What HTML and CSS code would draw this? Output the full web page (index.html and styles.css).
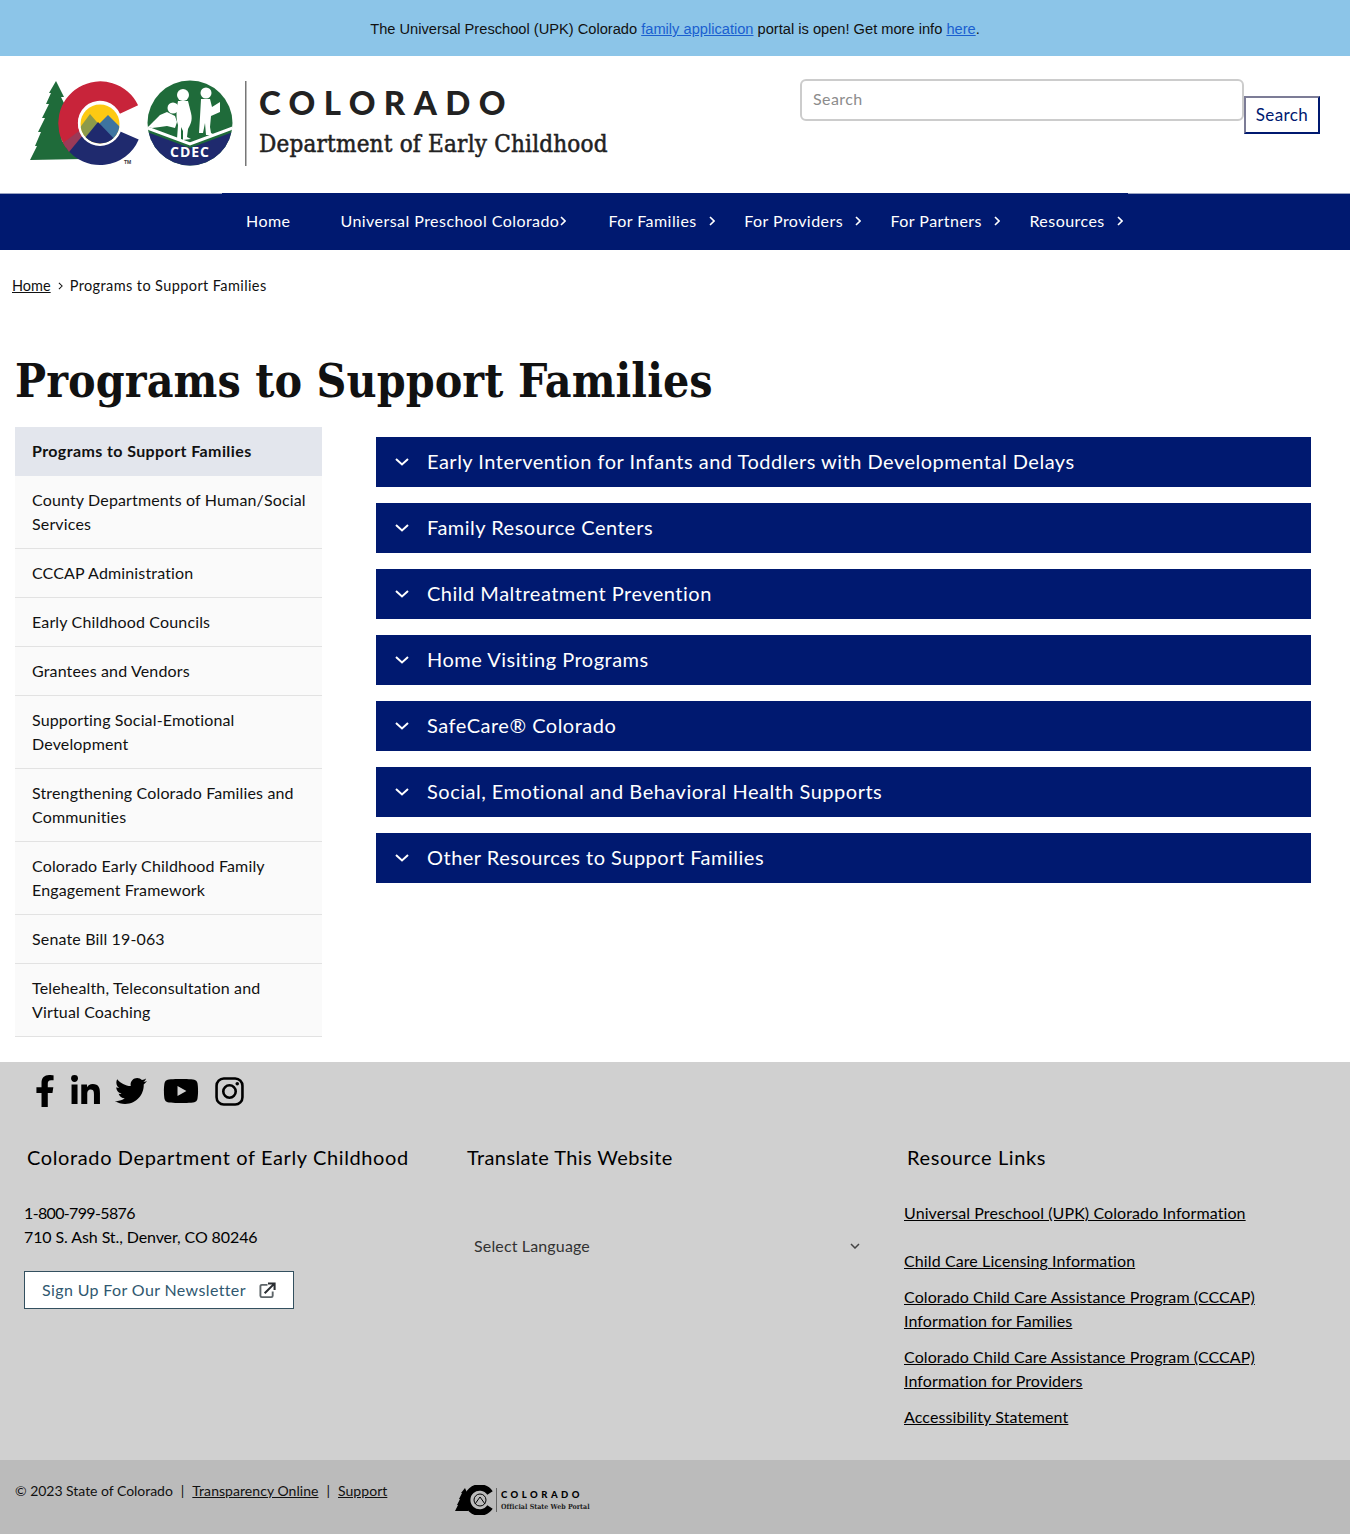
FILE: index.html
```html
<!DOCTYPE html>
<html lang="en">
<head>
<meta charset="utf-8">
<title>Programs to Support Families</title>
<link rel="stylesheet" href="styles.css">
</head>
<body>
<div class="banner">The Universal Preschool (UPK) Colorado <a href="#">family application</a> portal is open! Get more info <a href="#">here</a>.</div>
<header class="header">
  <div class="brand">
    <svg class="logo" viewBox="0 0 216 90" width="216" height="90" aria-hidden="true">
      <path fill="#1f6b3a" d="M26 0 34 16 31 16 38 30 30 46 32 60 52 78 0 79 7 65 5 65 11 51 8 51 15 37 12 37 19 23 16 23 21 12 19 12Z"/>
      <path fill="#c8243a" d="M108.100 24.200A42 42 0 1 0 36 66.700L52.200 54.900A22 22 0 1 1 89.900 32.700Z"/>
      <path fill="#1f2a6e" d="M36 66.700A42 42 0 0 0 108.700 58.400L90.300 50.600A22 22 0 0 1 52.200 54.900Z"/>
      <path fill="#9a3a58" d="M33 62 49 50 52.200 54.900 39 71Z"/>
      <circle cx="70" cy="43" r="22" fill="#fff"/>
      <clipPath id="c1"><circle cx="70" cy="43" r="19.500"/></clipPath>
      <g clip-path="url(#c1)">
        <rect x="48" y="22" width="44" height="44" fill="#fdc913"/>
        <path fill="#8d9a4a" d="M46 52 60 33 72 47 60 66H46Z"/>
        <path fill="#3e74a0" d="M68 44 78 34 94 50V66H76Z"/>
        <path fill="#1f2a6e" d="M46 68 68 41 94 68Z"/>
      </g>
      <text x="94" y="83" class="tm">TM</text>
      <circle cx="160" cy="42" r="42.500" fill="#1f6b3a"/>
      <clipPath id="c2"><circle cx="160" cy="42" r="42.500"/></clipPath>
      <g clip-path="url(#c2)">
        <path fill="#1f2a6e" d="M112 49 160 67 208 49V90H112Z"/>
        <path fill="none" stroke="#fff" stroke-width="3" d="M112 45 160 63 208 45"/>
      </g>
      <g fill="#fff">
        <circle cx="143" cy="27" r="5.500"/>
        <path d="M137 31 145 35 147 41 145 47 137 45 130 46 122 47 118 46 124 40 130 34Z"/>
        <circle cx="153" cy="14" r="6"/>
        <path d="M148 20H158L161 32C163 40 160 44 158 48L157 56 161 58 153 59 153 50 151 46 151 58 147 58 148 44C146 38 146 30 148 20Z"/>
        <circle cx="176" cy="12" r="5.500"/>
        <path d="M171 18H180L182 26 190 21 190 31 181 35 180 46 181 52 185 54 176 54 175 42 173 52 169 52 170 36Z"/>
      </g>
      <text x="160" y="76" class="cdec">CDEC</text>
      <rect x="215" y="0" width="1.500" height="85" fill="#777"/>
    </svg>
    <div class="wordmark">
      <div class="wm-top">COLORADO</div>
      <div class="wm-sub">Department of Early Childhood</div>
    </div>
  </div>
  <form class="search">
    <input class="search-input" type="text" placeholder="Search">
    <button class="search-btn" type="button">Search</button>
  </form>
</header>
<nav class="nav">
  <div class="nav-inner">
    <a class="nav-item nav-home" href="#">Home</a>
    <a class="nav-item nav-upk" href="#">Universal Preschool Colorado<svg class="chev" viewBox="0 0 6 10" width="6" height="10"><path d="M1 1l4 4-4 4" fill="none" stroke="#fff" stroke-width="1.600"/></svg></a>
    <a class="nav-item" href="#">For Families<svg class="chev" viewBox="0 0 6 10" width="6" height="10"><path d="M1 1l4 4-4 4" fill="none" stroke="#fff" stroke-width="1.600"/></svg></a>
    <a class="nav-item" href="#">For Providers<svg class="chev" viewBox="0 0 6 10" width="6" height="10"><path d="M1 1l4 4-4 4" fill="none" stroke="#fff" stroke-width="1.600"/></svg></a>
    <a class="nav-item" href="#">For Partners<svg class="chev" viewBox="0 0 6 10" width="6" height="10"><path d="M1 1l4 4-4 4" fill="none" stroke="#fff" stroke-width="1.600"/></svg></a>
    <a class="nav-item" href="#">Resources<svg class="chev" viewBox="0 0 6 10" width="6" height="10"><path d="M1 1l4 4-4 4" fill="none" stroke="#fff" stroke-width="1.600"/></svg></a>
  </div>
</nav>
<div class="crumbs"><a href="#">Home</a><svg class="crumb-sep" viewBox="0 0 6 10" width="5" height="8"><path d="M1 1l4 4-4 4" fill="none" stroke="#111" stroke-width="1.300"/></svg><span>Programs to Support Families</span></div>
<h1 class="title">Programs to Support Families</h1>
<main class="content">
  <ul class="side">
    <li class="side-item side-active">Programs to Support Families</li>
    <li class="side-item">County Departments of Human/Social Services</li>
    <li class="side-item">CCCAP Administration</li>
    <li class="side-item">Early Childhood Councils</li>
    <li class="side-item">Grantees and Vendors</li>
    <li class="side-item">Supporting Social-Emotional Development</li>
    <li class="side-item">Strengthening Colorado Families and Communities</li>
    <li class="side-item">Colorado Early Childhood Family Engagement Framework</li>
    <li class="side-item">Senate Bill 19-063</li>
    <li class="side-item">Telehealth, Teleconsultation and Virtual Coaching</li>
  </ul>
  <div class="accordion">
    <div class="acc"><svg class="acc-chev" viewBox="0 0 14 8" width="14" height="8"><path d="M1 1l6 5.500L13 1" fill="none" stroke="#fff" stroke-width="2"/></svg>Early Intervention for Infants and Toddlers with Developmental Delays</div>
    <div class="acc"><svg class="acc-chev" viewBox="0 0 14 8" width="14" height="8"><path d="M1 1l6 5.500L13 1" fill="none" stroke="#fff" stroke-width="2"/></svg>Family Resource Centers</div>
    <div class="acc"><svg class="acc-chev" viewBox="0 0 14 8" width="14" height="8"><path d="M1 1l6 5.500L13 1" fill="none" stroke="#fff" stroke-width="2"/></svg>Child Maltreatment Prevention</div>
    <div class="acc"><svg class="acc-chev" viewBox="0 0 14 8" width="14" height="8"><path d="M1 1l6 5.500L13 1" fill="none" stroke="#fff" stroke-width="2"/></svg>Home Visiting Programs</div>
    <div class="acc"><svg class="acc-chev" viewBox="0 0 14 8" width="14" height="8"><path d="M1 1l6 5.500L13 1" fill="none" stroke="#fff" stroke-width="2"/></svg>SafeCare® Colorado</div>
    <div class="acc"><svg class="acc-chev" viewBox="0 0 14 8" width="14" height="8"><path d="M1 1l6 5.500L13 1" fill="none" stroke="#fff" stroke-width="2"/></svg>Social, Emotional and Behavioral Health Supports</div>
    <div class="acc"><svg class="acc-chev" viewBox="0 0 14 8" width="14" height="8"><path d="M1 1l6 5.500L13 1" fill="none" stroke="#fff" stroke-width="2"/></svg>Other Resources to Support Families</div>
  </div>
</main>
<footer class="footer">
  <div class="social">
    <svg class="ic-f" viewBox="0 0 320 512" width="20" height="32"><path d="M279.140 288l14.220-92.660h-88.910v-60.130c0-25.350 12.420-50.060 52.240-50.060h40.420V6.260S260.430 0 225.360 0c-73.220 0-121.080 44.380-121.080 124.720v70.620H22.890V288h81.390v224h100.170V288z"/></svg>
    <svg class="ic-in" viewBox="0 0 448 512" width="29" height="33"><path d="M100.280 448H7.400V148.900h92.880zM53.790 108.100C24.090 108.100 0 83.500 0 53.800a53.790 53.790 0 0 1 107.580 0c0 29.700-24.100 54.300-53.790 54.300zM447.900 448h-92.680V302.400c0-34.700-.7-79.200-48.290-79.200-48.290 0-55.690 37.700-55.690 76.700V448h-92.780V148.900h89.080v40.800h1.300c12.400-23.500 42.690-48.300 87.880-48.300 94 0 111.280 61.900 111.280 142.300V448z"/></svg>
    <svg class="ic-tw" viewBox="0 0 512 512" width="32" height="32"><path d="M459.370 151.716c.325 4.548.325 9.097.325 13.645 0 138.720-105.583 298.558-298.558 298.558-59.452 0-114.680-17.219-161.137-47.106 8.447.974 16.568 1.299 25.340 1.299 49.055 0 94.213-16.568 130.274-44.832-46.132-.975-84.792-31.188-98.112-72.772 6.498.974 12.995 1.624 19.818 1.624 9.421 0 18.843-1.300 27.614-3.573-48.081-9.747-84.143-51.980-84.143-102.985v-1.299c13.969 7.797 30.214 12.670 47.431 13.319-28.264-18.843-46.781-51.005-46.781-87.391 0-19.492 5.197-37.360 14.294-52.954 51.655 63.675 129.300 105.258 216.365 109.807-1.624-7.797-2.599-15.918-2.599-24.040 0-57.828 46.782-104.934 104.934-104.934 30.213 0 57.502 12.670 76.670 33.137 23.715-4.548 46.456-13.320 66.599-25.340-7.798 24.366-24.366 44.833-46.132 57.827 21.117-2.273 41.584-8.122 60.426-16.243-14.292 20.791-32.161 39.308-52.628 54.253z"/></svg>
    <svg class="ic-yt" viewBox="0 0 576 512" width="36" height="32"><path d="M549.655 124.083c-6.281-23.650-24.787-42.276-48.284-48.597C458.781 64 288 64 288 64S117.220 64 74.629 75.486c-23.497 6.322-42.003 24.947-48.284 48.597-11.412 42.867-11.412 132.305-11.412 132.305s0 89.438 11.412 132.305c6.281 23.650 24.787 41.500 48.284 47.821C117.220 448 288 448 288 448s170.780 0 213.371-11.486c23.497-6.321 42.003-24.171 48.284-47.821 11.412-42.867 11.412-132.305 11.412-132.305s0-89.438-11.412-132.305zm-317.510 213.508V175.185l142.739 81.205-142.739 81.201z"/></svg>
    <svg class="ic-ig" viewBox="0 0 28 28" width="29" height="29"><rect x="1.500" y="1.500" width="25" height="25" rx="7" fill="none" stroke="#000" stroke-width="2.500"/><circle cx="14" cy="14" r="6" fill="none" stroke="#000" stroke-width="2.500"/><circle cx="21.500" cy="6.500" r="1.700"/></svg>
  </div>
  <div class="foot-cols">
    <section class="fcol">
      <h2 class="fhead fhead-a">Colorado Department of Early Childhood</h2>
      <p class="fline fphone">1-800-799-5876</p>
      <p class="fline">710 S. Ash St., Denver, CO 80246</p>
      <a class="news" href="#">Sign Up For Our Newsletter<svg class="ext" viewBox="0 0 18 18" width="17" height="17"><path d="M9 3H3a1.500 1.500 0 0 0-1.500 1.500v10A1.500 1.500 0 0 0 3 16h10a1.500 1.500 0 0 0 1.500-1.500V10" fill="none" stroke="#5d6468" stroke-width="2"/><path d="M6 12 16 2M9.500 1.500h7v7" fill="none" stroke="#2b2f33" stroke-width="2.200"/></svg></a>
    </section>
    <section class="fcol">
      <h2 class="fhead">Translate This Website</h2>
      <div class="lang"><span>Select Language</span><svg viewBox="0 0 10 6" width="10" height="6"><path d="M1 1l4 4 4-4" fill="none" stroke="#444" stroke-width="1.500"/></svg></div>
    </section>
    <section class="fcol">
      <h2 class="fhead fhead-c">Resource Links</h2>
      <ul class="links">
        <li class="link-first"><a href="#">Universal Preschool (UPK) Colorado Information</a></li>
        <li><a href="#">Child Care Licensing Information</a></li>
        <li><a href="#">Colorado Child Care Assistance Program (CCCAP) Information for Families</a></li>
        <li><a href="#">Colorado Child Care Assistance Program (CCCAP) Information for Providers</a></li>
        <li><a href="#">Accessibility Statement</a></li>
      </ul>
    </section>
  </div>
</footer>
<div class="bottom">
  <div class="legal">© 2023 State of Colorado<span class="pipe">|</span><a href="#">Transparency Online</a><span class="pipe">|</span><a href="#">Support</a></div>
  <div class="portal">
    <svg viewBox="0 0 42 30" width="42" height="30" aria-hidden="true"><path d="M10 3 13 10 12 10 15 18 13 26 16 26H0L3 20 2 20 5 14 4 14 7 8 6 8Z"/><path fill="none" stroke="#000" stroke-width="6.500" d="M35 8A12.500 12.500 0 1 0 35 22"/><circle cx="25" cy="15" r="6" fill="none" stroke="#000" stroke-width="1"/><path d="M20 19 25 12 30 19" fill="none" stroke="#000"/></svg>
    <div class="portal-text"><div class="portal-top">COLORADO</div><div class="portal-sub">Official State Web Portal</div></div>
  </div>
</div>
</body>
</html>
```
FILE: styles.css
```css
* { box-sizing: border-box; }
html, body { margin: 0; padding: 0; }
body { font-family: "Lato", "Noto Sans", sans-serif; font-size: 16px; letter-spacing: .15px; line-height: 24px; color: #111; background: #fff; }
a { color: inherit; }
ul { list-style: none; margin: 0; padding: 0; }
h1, h2, p { margin: 0; }

.banner { height: 56px; background: #8cc5e8; text-align: center; font-family: "Liberation Sans", Arial, sans-serif; font-size: 14.650px; letter-spacing: 0; line-height: 58px; color: #111; }
.banner a { color: #1a5fd0; }

.header { height: 137px; padding: 23px 30px 0; display: flex; justify-content: space-between; align-items: flex-start; }
.brand { display: flex; align-items: flex-start; padding-top: 2px; }
.logo { display: block; flex: none; overflow: visible; }
.tm { font: 700 5px "Liberation Sans", sans-serif; fill: #333; letter-spacing: 0; }
.cdec { font: 700 14px "Open Sans", sans-serif; fill: #fff; text-anchor: middle; letter-spacing: 1px; }
.wordmark { margin-left: 13px; color: #222; }
.wm-top { font-family: "Lato", sans-serif; font-weight: 900; font-size: 33px; line-height: 42px; letter-spacing: 8.400px; }
.wm-sub { font-family: "DejaVu Serif", serif; font-stretch: condensed; font-weight: 400; font-size: 24px; line-height: 30px; margin-top: 6px; letter-spacing: .2px; -webkit-text-stroke: .5px #222; }

.search { display: flex; align-items: flex-start; }
.search-input { width: 444px; height: 42px; border: 2px solid #ccc; border-radius: 6px; padding: 0 11px 4px; font: 16px "Lato", sans-serif; letter-spacing: .4px; background: #fff; }
.search-input::placeholder { color: #8c8c8c; opacity: 1; }
.search-btn { width: 76px; height: 38px; margin-top: 17px; background: #fff; border: 2px solid #001970; border-color: #7c7c96 #001970 #001970 #7c7c96; font: 17px "Lato", sans-serif; letter-spacing: .4px; color: #001970; padding: 0 0 2px; }

.nav { height: 57px; background: #001970; border-top: 1px solid #9aa3c2; }
.nav-inner { display: flex; height: 57px; margin: -1px 0 0 222px; width: 906px; padding: 0 0 2px 24px; align-items: center; background: #001970; letter-spacing: .45px; }
.nav-item { color: #fff; text-decoration: none; display: flex; align-items: center; flex: none; white-space: nowrap; margin-right: 29.500px; }
.chev { margin-left: 12px; flex: none; }
.nav-home { margin-right: 50px; }
.nav-upk { margin-right: 42px; }
.nav-upk .chev { margin-left: 1px; }

.crumbs { display: flex; align-items: center; padding: 24px 12px 0; font-size: 14.500px; letter-spacing: .4px; height: 48px; }
.crumbs a { letter-spacing: 0; }
.crumb-sep { margin: 0 7px; }

.title { font-family: "DejaVu Serif", serif; font-stretch: condensed; font-weight: 700; font-size: 46px; line-height: 56px; letter-spacing: .07px; color: #111; padding: 55px 15px 0; height: 129px; }

.content { display: flex; align-items: flex-start; padding-left: 15px; height: 635px; }
.side { width: 307px; flex: none; }
.side-item { padding: 12px 13px 12px 17px; background: #fafafa; border-bottom: 1px solid #e2e2e2; }
.side-active { background: #e3e6ed; font-weight: 700; letter-spacing: .4px; border-bottom-color: #e3e6ed; }

.accordion { width: 935px; margin: 10px 0 0 54px; display: flex; flex-direction: column; gap: 16px; }
.acc { height: 50px; background: #001970; color: #fff; display: flex; align-items: center; padding: 0 0 2px 19px; font-size: 20px; letter-spacing: .5px; }
.acc-chev { margin: 2px 18px 0 0; flex: none; }

.footer { height: 398px; background: #d0d0d0; color: #000; position: relative; }
.social { display: flex; align-items: center; height: 58px; padding: 0 0 0 35px; }
.social svg { flex: none; display: block; }
.ic-f { margin-right: 16px; }
.ic-in { margin-right: 15px; }
.ic-tw { margin-right: 16px; }
.ic-yt { margin-right: 16px; }
.foot-cols { display: grid; grid-template-columns: 440px 440px 1fr; padding: 23px 0 0 24px; }
.fhead { font-size: 20px; font-weight: 400; line-height: 28px; letter-spacing: .4px; margin-bottom: 30px; }
.fhead-a { padding-left: 3px; letter-spacing: .62px; }
.fhead-c { padding-left: 3px; letter-spacing: .6px; }
.fcol:nth-child(2) .fhead { padding-left: 3px; }
.fline { letter-spacing: -.1px; }
.fphone { letter-spacing: -.65px; }
.news { display: inline-flex; align-items: center; margin-top: 22px; height: 38px; width: 270px; padding-left: 17px; background: #fff; border: 1px solid #33505f; color: #2f5870; text-decoration: none; font-size: 16px; letter-spacing: .37px; }
.ext { margin-left: 13px; flex: none; }
.lang { width: 402px; display: flex; justify-content: space-between; align-items: center; margin-top: 63px; padding: 0 6px 0 10px; color: #333; }
.links { letter-spacing: .1px; max-width: 380px; }
.links li { margin-bottom: 12px; }
.links .link-first { margin-bottom: 24px; }
.links a { color: #000; }

.bottom { height: 74px; background: #bbb; display: flex; align-items: flex-start; padding: 19px 0 0 15px; position: relative; font-size: 14px; letter-spacing: -.03px; color: #111; }
.legal { width: 440px; }
.legal a { letter-spacing: .05px; }
.pipe { margin: 0 8px; }
.portal { display: flex; align-items: center; margin-top: 6px; }
.portal-text { border-left: 1px solid #666; margin-left: -1px; padding-left: 4px; }
.portal-top { font-family: "Lato", sans-serif; font-weight: 900; font-size: 9.500px; line-height: 13px; letter-spacing: 3.500px; color: #000; }
.portal-sub { font-family: "DejaVu Serif", serif; font-stretch: condensed; font-size: 7px; line-height: 11px; letter-spacing: .05px; font-weight: 700; color: #222; }
```
